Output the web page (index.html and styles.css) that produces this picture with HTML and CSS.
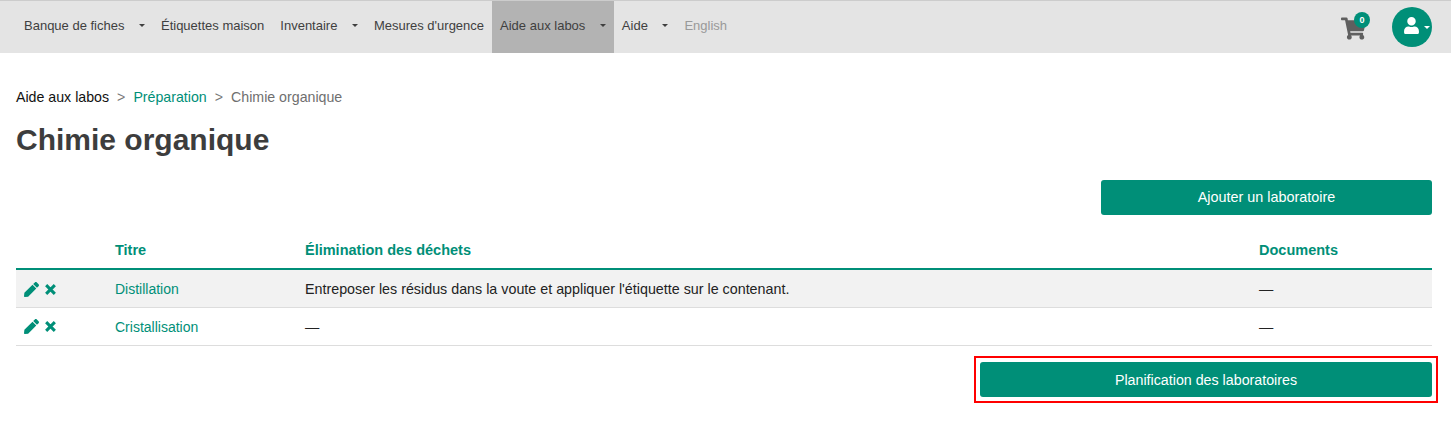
FILE: index.html
```html
<!DOCTYPE html>
<html lang="fr">
<head>
<meta charset="utf-8">
<title>Chimie organique</title>
<link rel="stylesheet" href="styles.css">
</head>
<body>
<nav class="topbar">
  <ul class="menu">
    <li class="item has-caret">Banque de fiches</li>
    <li class="item">Étiquettes maison</li>
    <li class="item has-caret">Inventaire</li>
    <li class="item">Mesures d'urgence</li>
    <li class="item has-caret active">Aide aux labos</li>
    <li class="item has-caret">Aide</li>
    <li class="item muted">English</li>
  </ul>
  <div class="tools">
    <div class="cart">
      <svg class="cart-icon" viewBox="0 0 576 512" aria-hidden="true"><path d="M528 301.300l47.300-208C578.700 78.300 567.300 64 551.900 64H159.200l-9.200-44.800C147.800 8 137.900 0 126.500 0H24C10.700 0 0 10.700 0 24v16c0 13.300 10.700 24 24 24h69.900l70.200 343.400C147.300 417.100 136 435.200 136 456c0 30.900 25.100 56 56 56s56-25.100 56-56c0-15.700-6.400-29.800-16.800-40h209.600C430.400 426.200 424 440.300 424 456c0 30.900 25.100 56 56 56s56-25.100 56-56c0-22.200-12.900-41.300-31.600-50.400l5.500-24.300c3.400-15-8-29.300-23.400-29.300H218.100l-6.500-32h293c11.200 0 20.900-7.800 23.400-18.700z"/></svg>
      <span class="badge">0</span>
    </div>
    <div class="avatar">
      <svg class="user-icon" viewBox="0 0 448 512" aria-hidden="true"><path d="M224 256c70.700 0 128-57.300 128-128S294.700 0 224 0 96 57.300 96 128s57.300 128 128 128zm89.600 32h-16.700c-22.200 10.200-46.900 16-72.900 16s-50.600-5.800-72.900-16h-16.700C60.200 288 0 348.200 0 422.400V464c0 26.500 21.500 48 48 48h352c26.500 0 48-21.500 48-48v-41.600c0-74.200-60.200-134.400-134.400-134.400z"/></svg>
      <span class="avatar-caret"></span>
    </div>
  </div>
</nav>
<main class="content">
  <ol class="crumbs">
    <li class="crumb-root">Aide aux labos</li>
    <li class="sep">&gt;</li>
    <li class="crumb-link">Préparation</li>
    <li class="sep">&gt;</li>
    <li class="crumb-current">Chimie organique</li>
  </ol>
  <h1 class="title">Chimie organique</h1>
  <div class="actions">
    <a class="btn btn-add">Ajouter un laboratoire</a>
  </div>
  <table class="labs">
    <thead>
      <tr>
        <th class="col-tools"></th>
        <th class="col-title">Titre</th>
        <th class="col-waste">Élimination des déchets</th>
        <th class="col-docs">Documents</th>
      </tr>
    </thead>
    <tbody>
      <tr class="odd">
        <td class="row-tools">
          <svg class="ico-edit" viewBox="0 0 512 512" aria-hidden="true"><path d="M290.740 93.240l128.020 128.020-277.990 277.990-114.140 12.600C11.350 513.540-1.560 500.620.14 485.340l12.700-114.220 277.900-277.880zm207.200-19.060l-60.110-60.110c-18.750-18.750-49.160-18.750-67.910 0l-56.550 56.550 128.020 128.020 56.550-56.550c18.750-18.760 18.750-49.160 0-67.910z"/></svg>
          <svg class="ico-x" viewBox="0 0 12 12" aria-hidden="true"><path d="M2 2l8 8M10 2l-8 8"/></svg>
        </td>
        <td><a class="link">Distillation</a></td>
        <td>Entreposer les résidus dans la voute et appliquer l'étiquette sur le contenant.</td>
        <td>—</td>
      </tr>
      <tr>
        <td class="row-tools">
          <svg class="ico-edit" viewBox="0 0 512 512" aria-hidden="true"><path d="M290.740 93.240l128.020 128.020-277.990 277.990-114.140 12.600C11.350 513.540-1.560 500.620.14 485.340l12.700-114.220 277.900-277.880zm207.200-19.060l-60.110-60.110c-18.750-18.750-49.160-18.750-67.910 0l-56.550 56.550 128.020 128.020 56.550-56.550c18.750-18.760 18.750-49.160 0-67.910z"/></svg>
          <svg class="ico-x" viewBox="0 0 12 12" aria-hidden="true"><path d="M2 2l8 8M10 2l-8 8"/></svg>
        </td>
        <td><a class="link">Cristallisation</a></td>
        <td>—</td>
        <td>—</td>
      </tr>
    </tbody>
  </table>
  <div class="actions actions-plan">
    <div class="highlight">
      <a class="btn btn-plan">Planification des laboratoires</a>
    </div>
  </div>
</main>
</body>
</html>
```

FILE: styles.css
```css
* { box-sizing: border-box; }
html, body { margin: 0; padding: 0; }
body {
  font-family: "Liberation Sans", Arial, sans-serif;
  font-size: 14px;
  color: #222;
  background: #fff;
}
.topbar {
  display: flex;
  justify-content: space-between;
  align-items: stretch;
  height: 53px;
  background: #e4e4e4;
  border-top: 1px solid #ccc;
  padding: 0 19px 0 16px;
}
.menu {
  display: flex;
  list-style: none;
  margin: 0;
  padding: 0;
}
.item {
  display: flex;
  align-items: center;
  padding: 0 8px 4px;
  font-size: 13px;
  color: #3f3f3f;
}
.item.has-caret::after {
  content: "";
  margin-left: 14.5px;
  border-top: 3px solid #3f3f3f;
  border-left: 3px solid transparent;
  border-right: 3px solid transparent;
}
.item.active { background: #b3b3b3; }
.item.muted { color: #999; }
.tools {
  display: flex;
  align-items: center;
  gap: 25px;
}
.cart { position: relative; width: 26px; height: 24px; margin-top: -1px; }
.cart-icon { width: 25px; height: 23px; fill: #5f5f5f; position: absolute; left: 0; top: 2px; }
.badge {
  position: absolute;
  left: 13px;
  top: -3px;
  width: 16px;
  height: 16px;
  border-radius: 50%;
  background: #008f78;
  color: #fff;
  font-size: 9px;
  font-weight: bold;
  line-height: 16px;
  text-align: center;
}
.avatar {
  position: relative;
  width: 40px;
  height: 40px;
  border-radius: 50%;
  background: #008f78;
}
.user-icon { position: absolute; left: 12px; top: 10px; width: 15px; height: 17px; fill: #fff; }
.avatar-caret {
  position: absolute;
  left: 32px;
  top: 19px;
  border-top: 3px solid #fff;
  border-left: 3px solid transparent;
  border-right: 3px solid transparent;
}
.content { padding: 0 19px 0 16px; }
.crumbs {
  display: flex;
  list-style: none;
  gap: 8px;
  margin: 0;
  padding: 36px 0 0;
  font-size: 14.2px;
  line-height: 17px;
}
.crumb-root { color: #111; }
.sep { color: #777; }
.crumb-link { color: #008f78; }
.crumb-current { color: #6f6f6f; }
.title {
  margin: 16px 0 0;
  font-size: 30px;
  line-height: 36px;
  font-weight: bold;
  color: #3d3d3d;
}
.actions { display: flex; justify-content: flex-end; margin-top: 22px; }
.btn {
  display: block;
  height: 35px;
  line-height: 35px;
  text-align: center;
  background: #008f78;
  color: #fff;
  font-size: 14.4px;
  border-radius: 3px;
}
.btn-add { width: 331px; }
.labs {
  width: 100%;
  border-collapse: collapse;
  table-layout: fixed;
  margin-top: 18px;
  font-size: 14.3px;
}
.labs th {
  height: 36px;
  padding: 0 8px 2px;
  text-align: left;
  font-size: 14.5px;
  color: #008f78;
  font-weight: bold;
  border-bottom: 2px solid #008f78;
}
.col-tools { width: 91px; }
.col-title { width: 190px; }
.col-docs { width: 181px; }
.labs td {
  height: 38px;
  padding: 1px 8px 0;
  border-bottom: 1px solid #ddd;
  color: #222;
}
.labs tr.odd td { background: #f2f2f2; }
.link { color: #008f78; font-size: 14px; }
.labs .row-tools { padding: 0 8px; }
.ico-edit { width: 15px; height: 15px; fill: #008f78; vertical-align: middle; }
.ico-x {
  width: 13px;
  height: 13px;
  fill: none;
  stroke: #008f78;
  stroke-width: 2.800;
  vertical-align: middle;
  margin-left: 1px;
}
.actions-plan { margin-top: 10px; }
.highlight { border: 2px solid #f00; padding: 4px; margin-right: -6px; }
.btn-plan { width: 452px; font-size: 14.25px; line-height: 37px; }
```
